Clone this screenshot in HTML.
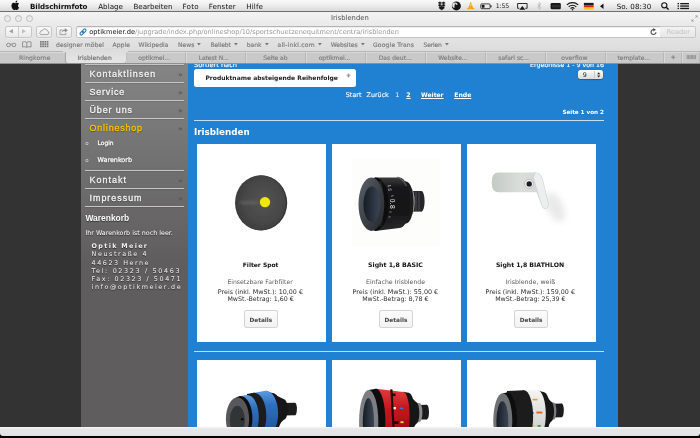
<!DOCTYPE html>
<html lang="de"><head><meta charset="utf-8"><title>Irisblenden</title>
<style>
html,body{margin:0;padding:0}
body{width:700px;height:438px;overflow:hidden;position:relative;background:#000;font-family:"DejaVu Sans",sans-serif}
.t{position:absolute;white-space:nowrap;margin:0;padding:0}
#root{position:absolute;left:0;top:0;width:700px;height:438px;overflow:hidden;will-change:transform}
.a{position:absolute}
svg{position:absolute;overflow:visible}
</style></head><body><div id="root">

<div class="a" style="left:0;top:63px;width:700px;height:365px;background:#333"></div>
<div class="a" style="left:81px;top:63px;width:107px;height:365px;background:linear-gradient(#858585,#5f5d5d 200px,#5f5d5d)"></div>
<div class="a" style="left:188px;top:63px;width:430px;height:365px;background:#2080d1"></div>
<div class="a" style="left:85px;top:63.9px;width:99px;height:1.1px;background:#c6c6c6;box-shadow:0 0.8px 1px rgba(0,0,0,.15)"></div>
<div class="a" style="left:85px;top:81.9px;width:99px;height:1.1px;background:#c6c6c6;box-shadow:0 0.8px 1px rgba(0,0,0,.15)"></div>
<div class="a" style="left:85px;top:99.8px;width:99px;height:1.1px;background:#c6c6c6;box-shadow:0 0.8px 1px rgba(0,0,0,.15)"></div>
<div class="a" style="left:85px;top:118.0px;width:99px;height:1.1px;background:#c6c6c6;box-shadow:0 0.8px 1px rgba(0,0,0,.15)"></div>
<div class="a" style="left:85px;top:170.1px;width:99px;height:1.1px;background:#c6c6c6;box-shadow:0 0.8px 1px rgba(0,0,0,.15)"></div>
<div class="a" style="left:85px;top:188.4px;width:99px;height:1.1px;background:#c6c6c6;box-shadow:0 0.8px 1px rgba(0,0,0,.15)"></div>
<div class="a" style="left:85px;top:206.4px;width:99px;height:1.1px;background:#c6c6c6;box-shadow:0 0.8px 1px rgba(0,0,0,.15)"></div>
<a id="t0" class="t" style="left:89.50px;top:66.60px;font:400 8.90px/14px 'Liberation Sans',sans-serif;color:#f4f4f4;letter-spacing:1.034px;text-shadow:0 0.5px 1px rgba(0,0,0,.55);-webkit-text-stroke:0.3px;">Kontaktlinsen</a>
<a id="t1" class="t" style="left:89.50px;top:84.60px;font:400 8.90px/14px 'Liberation Sans',sans-serif;color:#f4f4f4;letter-spacing:0.851px;text-shadow:0 0.5px 1px rgba(0,0,0,.55);-webkit-text-stroke:0.3px;">Service</a>
<a id="t2" class="t" style="left:89.50px;top:102.60px;font:400 8.90px/14px 'Liberation Sans',sans-serif;color:#f4f4f4;letter-spacing:0.926px;text-shadow:0 0.5px 1px rgba(0,0,0,.55);-webkit-text-stroke:0.3px;">Über uns</a>
<a id="t3" class="t" style="left:89.50px;top:120.80px;font:400 8.90px/14px 'Liberation Sans',sans-serif;color:#ffc400;letter-spacing:0.844px;text-shadow:0 0.5px 1px rgba(0,0,0,.55);-webkit-text-stroke:0.3px;">Onlineshop</a>
<a id="t4" class="t" style="left:89.50px;top:173.00px;font:400 8.90px/14px 'Liberation Sans',sans-serif;color:#f4f4f4;letter-spacing:1.065px;text-shadow:0 0.5px 1px rgba(0,0,0,.55);-webkit-text-stroke:0.3px;">Kontakt</a>
<a id="t5" class="t" style="left:89.50px;top:191.00px;font:400 8.90px/14px 'Liberation Sans',sans-serif;color:#f4f4f4;letter-spacing:1.014px;text-shadow:0 0.5px 1px rgba(0,0,0,.55);-webkit-text-stroke:0.3px;">Impressum</a>
<span id="t6" class="t" style="left:178.00px;top:68.80px;font:700 7.20px/11px 'DejaVu Sans',sans-serif;color:#5a5a5a;">»</span>
<span id="t7" class="t" style="left:178.00px;top:86.80px;font:700 7.20px/11px 'DejaVu Sans',sans-serif;color:#5a5a5a;">»</span>
<span id="t8" class="t" style="left:178.00px;top:104.80px;font:700 7.20px/11px 'DejaVu Sans',sans-serif;color:#585858;">»</span>
<span id="t9" class="t" style="left:178.00px;top:123.00px;font:700 7.20px/11px 'DejaVu Sans',sans-serif;color:#565656;">»</span>
<span id="t10" class="t" style="left:178.00px;top:175.20px;font:700 7.20px/11px 'DejaVu Sans',sans-serif;color:#555;">»</span>
<span id="t11" class="t" style="left:178.00px;top:193.20px;font:700 7.20px/11px 'DejaVu Sans',sans-serif;color:#555;">»</span>
<span id="t12" class="t" style="left:85.20px;top:138.70px;font:400 5.50px/9px 'DejaVu Sans',sans-serif;color:#ddd;">o</span>
<span id="t13" class="t" style="left:85.20px;top:155.70px;font:400 5.50px/9px 'DejaVu Sans',sans-serif;color:#ddd;">o</span>
<a id="t14" class="t" style="left:97.60px;top:138.30px;font:400 5.93px/10px 'DejaVu Sans',sans-serif;color:#fff;text-shadow:0 0.5px 1px rgba(0,0,0,.55);-webkit-text-stroke:0.25px;">Login</a>
<a id="t15" class="t" style="left:97.60px;top:155.30px;font:400 6.40px/10px 'DejaVu Sans',sans-serif;color:#fff;text-shadow:0 0.5px 1px rgba(0,0,0,.55);-webkit-text-stroke:0.25px;">Warenkorb</a>
<span id="t16" class="t" style="left:85.40px;top:211.80px;font:700 8.46px/13px 'Liberation Sans',sans-serif;color:#fff;text-shadow:0 0.5px 1px rgba(0,0,0,.55);">Warenkorb</span>
<span id="t17" class="t" style="left:85.40px;top:227.80px;font:400 6.36px/10px 'DejaVu Sans',sans-serif;color:#fff;text-shadow:0 0.5px 1px rgba(0,0,0,.55);">Ihr Warenkorb ist noch leer.</span>
<span id="t18" class="t" style="left:91.60px;top:241.10px;font:700 6.40px/10px 'DejaVu Sans',sans-serif;color:#f2f2f2;letter-spacing:1.329px;text-shadow:0 0.5px 1px rgba(0,0,0,.55);">Optik Meier</span>
<span id="t19" class="t" style="left:91.60px;top:249.30px;font:400 6.40px/10px 'DejaVu Sans',sans-serif;color:#f2f2f2;letter-spacing:1.570px;text-shadow:0 0.5px 1px rgba(0,0,0,.55);">Neustraße 4</span>
<span id="t20" class="t" style="left:91.60px;top:257.60px;font:400 6.40px/10px 'DejaVu Sans',sans-serif;color:#f2f2f2;letter-spacing:1.529px;text-shadow:0 0.5px 1px rgba(0,0,0,.55);">44623 Herne</span>
<span id="t21" class="t" style="left:91.60px;top:265.80px;font:400 6.40px/10px 'DejaVu Sans',sans-serif;color:#f2f2f2;letter-spacing:1.665px;text-shadow:0 0.5px 1px rgba(0,0,0,.55);">Tel: 02323 / 50463</span>
<span id="t22" class="t" style="left:91.60px;top:274.00px;font:400 6.40px/10px 'DejaVu Sans',sans-serif;color:#f2f2f2;letter-spacing:1.597px;text-shadow:0 0.5px 1px rgba(0,0,0,.55);">Fax: 02323 / 50471</span>
<span id="t23" class="t" style="left:91.60px;top:282.20px;font:400 6.40px/10px 'DejaVu Sans',sans-serif;color:#f2f2f2;letter-spacing:1.574px;text-shadow:0 0.5px 1px rgba(0,0,0,.55);">info@optikmeier.de</span>
<span id="t24" class="t" style="left:194.00px;top:59.80px;font:400 6.63px/11px 'DejaVu Sans',sans-serif;color:#fff;-webkit-text-stroke:0.15px;">Sortiert nach</span>
<div class="a" style="left:194px;top:69.4px;width:162px;height:17.8px;background:#fff;border-radius:2.5px"></div>
<span id="t25" class="t" style="left:205.40px;top:73.20px;font:700 6.02px/10px 'DejaVu Sans',sans-serif;color:#222;">Produktname absteigende Reihenfolge</span>
<svg style="left:346.3px;top:72.8px" width="5" height="5" viewBox="0 0 10 10"><path d="M5 0.5 L7.5 3.5 H6 V4.5 H7 V3.2 L9.5 5 L7 6.8 V5.5 H6 V6.5 H7.5 L5 9.5 L2.5 6.5 H4 V5.5 H3 V6.8 L0.5 5 L3 3.2 V4.5 H4 V3.5 H2.5 Z" fill="#9a9a9a"/></svg>
<span id="t26" class="t" style="left:530.00px;top:60.20px;font:400 6.27px/10px 'DejaVu Sans',sans-serif;color:#fff;-webkit-text-stroke:0.15px;">Ergebnisse 1 - 9 von 16</span>
<div class="a" style="left:578.3px;top:70px;width:24.5px;height:8.8px;border-radius:2.5px;background:linear-gradient(#fdfdfd,#e9e9e9 55%,#dcdcdc);box-shadow:0 0.5px 1px rgba(0,0,0,.45)"></div>
<div class="a" style="left:594px;top:70.6px;width:0.6px;height:7.6px;background:#c9c9c9"></div>
<span id="t27" class="t" style="left:582.80px;top:69.50px;font:400 6.40px/10px 'DejaVu Sans',sans-serif;color:#111;">9</span>
<svg style="left:596.6px;top:71.6px" width="3.4" height="5.8" viewBox="0 0 6 10"><path d="M3 0.3 L5.6 3.8 H0.4 Z M3 9.7 L5.6 6.2 H0.4 Z" fill="#222"/></svg>
<span id="t28" class="t" style="left:345.80px;top:89.60px;font:400 6.43px/10px 'DejaVu Sans',sans-serif;color:#f2f8fd;-webkit-text-stroke:0.15px;">Start</span>
<span id="t29" class="t" style="left:366.60px;top:89.60px;font:400 6.36px/10px 'DejaVu Sans',sans-serif;color:#f2f8fd;-webkit-text-stroke:0.15px;">Zurück</span>
<span id="t30" class="t" style="left:395.30px;top:89.60px;font:400 6.30px/10px 'DejaVu Sans',sans-serif;color:#f2f8fd;">1</span>
<a id="t31" class="t" style="left:406.30px;top:89.60px;font:700 6.30px/10px 'DejaVu Sans',sans-serif;color:#fff;text-decoration:underline;">2</a>
<a id="t32" class="t" style="left:421.00px;top:89.60px;font:700 6.05px/10px 'DejaVu Sans',sans-serif;color:#fff;text-decoration:underline;">Weiter</a>
<a id="t33" class="t" style="left:454.20px;top:89.60px;font:700 6.17px/10px 'DejaVu Sans',sans-serif;color:#fff;text-decoration:underline;">Ende</a>
<span id="t34" class="t" style="left:562.40px;top:107.50px;font:700 5.67px/9px 'DejaVu Sans',sans-serif;color:#fff;letter-spacing:-0.021px;">Seite 1 von 2</span>
<div class="a" style="left:194px;top:120px;width:410px;height:1px;background:#c6ddf2"></div>
<h1 id="t35" class="t" style="left:194.00px;top:125.50px;font:700 8.75px/13px 'DejaVu Sans',sans-serif;color:#fff;">Irisblenden</h1>
<div class="a" style="left:194px;top:351px;width:410px;height:1px;background:#c6ddf2"></div>
<div class="a" style="left:196.8px;top:144.3px;width:129.3px;height:198px;background:#fff"></div>
<div class="a" style="left:196.8px;top:360.2px;width:129.3px;height:70px;background:#fff"></div>
<span id="t36" class="t" style="left:242.80px;top:259.80px;font:700 5.97px/10px 'DejaVu Sans',sans-serif;color:#111;">Filter Spot</span>
<span id="t37" class="t" style="left:227.40px;top:276.70px;font:400 6.15px/10px 'DejaVu Sans',sans-serif;color:#5a5a5a;">Einsetzbare Farbfilter</span>
<span id="t38" class="t" style="left:217.80px;top:286.70px;font:400 6.37px/10px 'DejaVu Sans',sans-serif;color:#2e2e2e;">Preis (inkl. MwSt.): 10,00 €</span>
<span id="t39" class="t" style="left:227.40px;top:293.90px;font:400 6.30px/10px 'DejaVu Sans',sans-serif;color:#2e2e2e;">MwSt.-Betrag: 1,60 €</span>
<div class="a" style="left:244.0px;top:310.1px;width:32.4px;height:16.2px;border:0.6px solid #d3d3d3;border-radius:2.2px;background:linear-gradient(#fcfcfc,#f2f2f2)"></div>
<a id="t40" class="t" style="left:249.45px;top:314.60px;font:700 5.81px/10px 'DejaVu Sans',sans-serif;color:#444;">Details</a>
<div class="a" style="left:331.9px;top:144.3px;width:129.3px;height:198px;background:#fff"></div>
<div class="a" style="left:331.9px;top:360.2px;width:129.3px;height:70px;background:#fff"></div>
<span id="t41" class="t" style="left:368.00px;top:259.80px;font:700 6.24px/10px 'DejaVu Sans',sans-serif;color:#111;">Sight 1,8 BASIC</span>
<span id="t42" class="t" style="left:366.00px;top:276.70px;font:400 6.19px/10px 'DejaVu Sans',sans-serif;color:#5a5a5a;">Einfache Irisblende</span>
<span id="t43" class="t" style="left:352.60px;top:286.70px;font:400 6.40px/10px 'DejaVu Sans',sans-serif;color:#2e2e2e;">Preis (inkl. MwSt.): 55,00 €</span>
<span id="t44" class="t" style="left:362.20px;top:293.90px;font:400 6.31px/10px 'DejaVu Sans',sans-serif;color:#2e2e2e;">MwSt.-Betrag: 8,78 €</span>
<div class="a" style="left:379.0px;top:310.1px;width:32.4px;height:16.2px;border:0.6px solid #d3d3d3;border-radius:2.2px;background:linear-gradient(#fcfcfc,#f2f2f2)"></div>
<a id="t45" class="t" style="left:384.55px;top:314.60px;font:700 5.81px/10px 'DejaVu Sans',sans-serif;color:#444;">Details</a>
<div class="a" style="left:467.0px;top:144.3px;width:129.3px;height:198px;background:#fff"></div>
<div class="a" style="left:467.0px;top:360.2px;width:129.3px;height:70px;background:#fff"></div>
<span id="t46" class="t" style="left:495.90px;top:259.80px;font:700 6.17px/10px 'DejaVu Sans',sans-serif;color:#111;">Sight 1,8 BIATHLON</span>
<span id="t47" class="t" style="left:505.50px;top:276.70px;font:400 6.31px/10px 'DejaVu Sans',sans-serif;color:#5a5a5a;">Irisblende, weiß</span>
<span id="t48" class="t" style="left:485.60px;top:286.70px;font:400 6.38px/10px 'DejaVu Sans',sans-serif;color:#2e2e2e;">Preis (inkl. MwSt.): 159,00 €</span>
<span id="t49" class="t" style="left:495.20px;top:293.90px;font:400 6.30px/10px 'DejaVu Sans',sans-serif;color:#2e2e2e;">MwSt.-Betrag: 25,39 €</span>
<div class="a" style="left:514.1px;top:310.1px;width:32.4px;height:16.2px;border:0.6px solid #d3d3d3;border-radius:2.2px;background:linear-gradient(#fcfcfc,#f2f2f2)"></div>
<a id="t50" class="t" style="left:519.65px;top:314.60px;font:700 5.81px/10px 'DejaVu Sans',sans-serif;color:#444;">Details</a>
<svg style="left:0;top:0" width="700" height="438" viewBox="0 0 700 438">
<defs>
<radialGradient id="gd" cx="0.56" cy="0.48" r="0.62"><stop offset="0" stop-color="#555555"/><stop offset="0.6" stop-color="#474747"/><stop offset="1" stop-color="#393939"/></radialGradient>
<linearGradient id="gv" x1="0" y1="0" x2="0" y2="1"><stop offset="0" stop-color="#3c3c3e"/><stop offset="0.18" stop-color="#19191b"/><stop offset="0.7" stop-color="#151517"/><stop offset="1" stop-color="#2a2a2c"/></linearGradient>
<linearGradient id="gface" x1="0" y1="0" x2="1" y2="1"><stop offset="0" stop-color="#5b6068"/><stop offset="1" stop-color="#23262b"/></linearGradient>
<linearGradient id="ghole" x1="0" y1="0" x2="1" y2="0"><stop offset="0" stop-color="#171b24"/><stop offset="1" stop-color="#3b4656"/></linearGradient>
<linearGradient id="gblue" x1="0" y1="0" x2="0" y2="1"><stop offset="0" stop-color="#5d9be0"/><stop offset="0.3" stop-color="#2f6fc0"/><stop offset="1" stop-color="#1f4f96"/></linearGradient>
<linearGradient id="gred" x1="0" y1="0" x2="0" y2="1"><stop offset="0" stop-color="#e03a3a"/><stop offset="0.35" stop-color="#c3141c"/><stop offset="1" stop-color="#8e0c12"/></linearGradient>
<linearGradient id="gplate" x1="0" y1="0" x2="1" y2="0"><stop offset="0" stop-color="#c3c9c4"/><stop offset="0.5" stop-color="#d9deda"/><stop offset="1" stop-color="#d0d5d2"/></linearGradient>
<linearGradient id="gwhite" x1="0" y1="0" x2="0" y2="1"><stop offset="0" stop-color="#f4f4f2"/><stop offset="1" stop-color="#c9c9c6"/></linearGradient>
<filter id="bl" x="-50%" y="-50%" width="200%" height="200%"><feGaussianBlur stdDeviation="3"/></filter>
<filter id="b2" x="-30%" y="-100%" width="160%" height="300%"><feGaussianBlur stdDeviation="1.2"/></filter>
<filter id="b1" x="-20%" y="-20%" width="140%" height="140%"><feGaussianBlur stdDeviation="0.35"/></filter>
</defs>
<g filter="url(#b1)">
<ellipse cx="261.6" cy="202.9" rx="25.6" ry="27.5" fill="#303030"/>
<ellipse cx="260.5" cy="202.8" rx="25.5" ry="27.5" fill="url(#gd)"/>
<ellipse cx="249" cy="202.6" rx="10" ry="2.2" fill="#6a6a6a" opacity="0.55" filter="url(#b2)"/>
<circle cx="265" cy="202.1" r="5.2" fill="#efe80f"/>
</g>
<rect x="352" y="158" width="88" height="88" fill="#fdfdfc"/>
<g filter="url(#b1)">
<path d="M408 191 L421.5 191 L421.5 211.6 L408 211.6 Z" fill="#26262a"/><ellipse cx="421.5" cy="201.3" rx="3.1" ry="10.3" fill="#26262a"/>
<path d="M413 191.5 V211 M416 191.5 V211 M419 191.5 V211" stroke="#55555a" stroke-width="0.8"/>
<path d="M404 187.8 L410.5 187.8 L410.5 215.8 L404 215.8 Z" fill="#9a9a9a"/><ellipse cx="410.5" cy="201.8" rx="4.2" ry="14" fill="#9a9a9a"/>
<path d="M396 181.4 L406 181.4 L406 223.4 L396 223.4 Z" fill="#1a1a1c"/><ellipse cx="406" cy="202.4" rx="7.6" ry="21" fill="#1a1a1c"/>
<path d="M375 177.5 L399.5 177.6 L399.5 228 L375 230.9 Z" fill="url(#gv)"/><ellipse cx="399.5" cy="202.8" rx="10.6" ry="25.2" fill="url(#gv)"/>
<ellipse cx="375.6" cy="204.2" rx="12.9" ry="26.7" fill="#0d0d0f"/>
<ellipse cx="371.4" cy="204.2" rx="12.9" ry="26.7" fill="url(#gface)"/>
<ellipse cx="371.9" cy="204.2" rx="8.5" ry="17.6" fill="url(#ghole)"/>
<text transform="translate(389.6 198.8) rotate(90)" font-family="'Liberation Sans',sans-serif" font-size="6.6" fill="#e9e9e9" letter-spacing="0.4">0.8</text>
<text transform="translate(387.8 184.8) rotate(84)" font-family="'Liberation Sans',sans-serif" font-size="4.3" fill="#dcdcdc" letter-spacing="0.2">1.5</text>
<path d="M391 196.3 L393.6 195.6 M389.5 212 L391.5 212 M388.5 217 L390.5 216.8" stroke="#d0d0d0" stroke-width="0.6"/>
<path d="M380.3 181 Q385.2 203 380.3 227" fill="none" stroke="#3a3a3d" stroke-width="2.2" stroke-dasharray="0.5 0.6"/>
<path d="M397 177 Q403 179 406.5 186" fill="none" stroke="#6a6a6e" stroke-width="1.2" opacity="0.8"/>
</g>
<ellipse cx="555" cy="207" rx="8" ry="16" fill="#e9e9e9" filter="url(#bl)" transform="rotate(-25 555 207)"/>
<g filter="url(#b1)">
<path d="M498 172.4 H535 Q541 173 542.5 179 L548.3 203 Q549 208 545.8 209 Q543 209 541.5 205 L536.5 192.3 H498 Q491.7 192 491.7 182.3 Q491.7 172.6 498 172.4 Z" fill="url(#gplate)"/>
<path d="M535 172.4 Q541 173 542.5 179 L548.3 203 Q549 208 545.8 209 Q543 209 541.5 205 L533.5 178 Z" fill="#eceff0" stroke="#c2c7c5" stroke-width="0.4"/>
<circle cx="529" cy="183.8" r="4.5" fill="#eceeee" stroke="#9a9d9b" stroke-width="0.5"/>
<circle cx="529.2" cy="183.9" r="2.7" fill="#1c1f26"/>
</g>
<clipPath id="cp"><rect x="190" y="360" width="420" height="67.5"/></clipPath>
<g clip-path="url(#cp)"><g filter="url(#b1)">
<path d="M283 403 L295 402.7 L295 415.3 L283 415.6 Z" fill="#1b1b1f"/><ellipse cx="295" cy="409" rx="1.9" ry="6.3" fill="#1b1b1f"/>
<path d="M272 393.4 L283.5 399 L283.5 420 L272 431.4 Z" fill="#141417"/><ellipse cx="283.5" cy="409.5" rx="4.2" ry="10.5" fill="#141417"/>
<path d="M266 390.8 L272 392.9 L272 431.9 L266 436.4 Z" fill="#18181b"/><ellipse cx="272" cy="412.4" rx="10.3" ry="19.5" fill="#18181b"/>
<path d="M254 392.7 L266 390.8 L266 436.4 L254 439.1 Z" fill="url(#gblue)"/><ellipse cx="266" cy="413.6" rx="12.1" ry="22.8" fill="url(#gblue)"/>
<path d="M247 393.9 L254 392.7 L254 439.1 L247 440.5 Z" fill="#1c1c1f"/><ellipse cx="254" cy="415.9" rx="12.3" ry="23.2" fill="#1c1c1f"/>
<path d="M240.5 396.1 L247 394.9 L247 439.5 L240.5 440.7 Z" fill="url(#gblue)"/><ellipse cx="247" cy="417.2" rx="11.8" ry="22.3" fill="url(#gblue)"/>
<path d="M237.5 397.3 L240.5 396 L240.5 440.8 L237.5 440.7 Z" fill="#0e0e10"/><ellipse cx="240.5" cy="418.4" rx="11.9" ry="22.4" fill="#0e0e10"/>
<ellipse cx="237.5" cy="419" rx="11.6" ry="21.7" fill="#58595b"/>
<ellipse cx="237.3" cy="420.3" rx="7.6" ry="14.6" fill="#333436"/>
<circle cx="242.3" cy="419.3" r="1.4" fill="#0c0c0c"/>
<path d="M419 405 L426.8 404.8 L426.8 419.4 L419 419.6 Z" fill="#1a1a1d"/><ellipse cx="426.8" cy="412.1" rx="2.2" ry="7.3" fill="#1a1a1d"/>
<path d="M415 403.2 L419.6 403.1 L419.6 421.9 L415 422.4 Z" fill="#8a8a8e"/><ellipse cx="419.6" cy="412.5" rx="2.8" ry="9.4" fill="#8a8a8e"/>
<path d="M408 394 L416 402 L416 424 L408 436 Z" fill="#131315"/><ellipse cx="416" cy="413" rx="3.3" ry="11" fill="#131315"/>
<path d="M403 391.7 L408.5 392.8 L408.5 437.8 L403 440.7 Z" fill="#161618"/><ellipse cx="408.5" cy="415.3" rx="6.5" ry="22.5" fill="#161618"/>
<path d="M376 388.7 L403.3 391.9 L403.3 440.5 L376 452.7 Z" fill="url(#gred)"/><ellipse cx="403.3" cy="416.2" rx="6.3" ry="24.3" fill="url(#gred)"/>
<path d="M390.3 389.2 L392.5 389.4 L394.8 430 L392.6 430 Z" fill="#1c0a0c"/>
<rect x="393.6" y="407" width="2.3" height="2.3" fill="#fff"/><rect x="399.8" y="407.6" width="3.4" height="1.5" fill="#2a7fd0"/><rect x="400.5" y="421.3" width="3" height="1.8" fill="#f0e040"/><rect x="391.5" y="393.5" width="4" height="2.6" fill="#1c0a0c"/><rect x="393.5" y="421" width="5" height="3" fill="#1c0a0c"/>
<path d="M368.7 390 L376 388.7 L376 452.7 L368.7 454 Z" fill="#0d0d0f"/><ellipse cx="376" cy="420.7" rx="9.3" ry="32" fill="#0d0d0f"/>
<ellipse cx="368.7" cy="422" rx="9.6" ry="32" fill="#7d7f82"/>
<ellipse cx="368.4" cy="422.5" rx="5.6" ry="24.6" fill="url(#ghole)"/>
<path d="M553 403.7 L561.7 403.5 L561.7 417.3 L553 417.5 Z" fill="#1a1a1d"/><ellipse cx="561.7" cy="410.4" rx="2.1" ry="6.9" fill="#1a1a1d"/>
<path d="M550 402.4 L553.8 402.4 L553.8 419.6 L550 420 Z" fill="#7a7a7e"/><ellipse cx="553.8" cy="411" rx="2.6" ry="8.6" fill="#7a7a7e"/>
<path d="M543 393 L551 401.5 L551 421.5 L543 433 Z" fill="#131315"/><ellipse cx="551" cy="411.5" rx="3" ry="10" fill="#131315"/>
<path d="M537.5 390.6 L543.3 392 L543.3 434 L537.5 437.6 Z" fill="#161618"/><ellipse cx="543.3" cy="413" rx="7.2" ry="21" fill="#161618"/>
<path d="M524 390.2 L537.5 390.1 L537.5 438.1 L524 443.2 Z" fill="url(#gwhite)"/><ellipse cx="537.5" cy="414.1" rx="8.3" ry="24" fill="url(#gwhite)"/>
<rect x="532.5" y="398.8" width="5" height="1.6" fill="#d9a520"/><rect x="536.4" y="411.6" width="6" height="1.9" fill="#e8641c"/><rect x="531" y="412.2" width="2.8" height="1.8" fill="#2a7fd0"/><rect x="531.6" y="425" width="3" height="1.6" fill="#cfd02a"/><rect x="537.5" y="425.2" width="3.3" height="1.5" fill="#2f8a3a"/>
<path d="M507 390.9 L524 390.2 L524 443.2 L507 448.9 Z" fill="#1a1a1d"/><ellipse cx="524" cy="416.7" rx="9.1" ry="26.5" fill="#1a1a1d"/>
<path d="M502.8 393.2 L507.3 392.4 L507.3 447.4 L502.8 448.2 Z" fill="#0c0c0e"/><ellipse cx="507.3" cy="419.9" rx="9.5" ry="27.5" fill="#0c0c0e"/>
<ellipse cx="502.8" cy="420.7" rx="9.5" ry="27.5" fill="#6f7174"/>
<ellipse cx="502.4" cy="421.5" rx="6" ry="20.2" fill="url(#ghole)"/>
</g></g>
</svg>
<div class="a" style="left:0;top:427.3px;width:700px;height:8.4px;background:linear-gradient(#f6f6f6,#e6e6e6 25%,#e2e2e2);border-radius:0 0 3px 3px"></div>
<div class="a" style="left:0;top:0;width:700px;height:12px;background:linear-gradient(#fafafa,#ececec 45%,#d6d6d6)"></div>
<div class="a" style="left:0;top:11.2px;width:700px;height:1px;background:#707070"></div>
<svg style="left:10.8px;top:0.3px" width="9" height="10.6" viewBox="0 0 18 22"><path d="M14.2 11.7c0-2.6 2.1-3.8 2.2-3.9-1.2-1.8-3.1-2-3.7-2-1.6-.2-3.1.9-3.9.9-.8 0-2-.9-3.3-.9-1.7 0-3.3 1-4.1 2.5-1.8 3-.5 7.5 1.3 10 .8 1.2 1.8 2.6 3.1 2.5 1.3 0 1.7-.8 3.2-.8s1.9.8 3.2.8c1.3 0 2.2-1.2 3-2.4.9-1.4 1.3-2.7 1.3-2.8 0 0-2.5-1-2.3-3.8zM11.8 4c.7-.8 1.2-2 1-3.2-1 0-2.2.7-2.9 1.5-.6.7-1.2 1.9-1 3 1.1.1 2.2-.5 2.9-1.3z" fill="#111"/></svg>
<span id="t51" class="t" style="left:30.00px;top:0.70px;font:700 7.15px/11px 'DejaVu Sans',sans-serif;color:#111;letter-spacing:-0.097px;">Bildschirmfoto</span>
<span id="t52" class="t" style="left:98.20px;top:0.70px;font:400 7.15px/11px 'DejaVu Sans',sans-serif;color:#111;letter-spacing:0.019px;">Ablage</span>
<span id="t53" class="t" style="left:133.50px;top:0.70px;font:400 7.15px/11px 'DejaVu Sans',sans-serif;color:#111;letter-spacing:-0.026px;">Bearbeiten</span>
<span id="t54" class="t" style="left:182.50px;top:0.70px;font:400 7.15px/11px 'DejaVu Sans',sans-serif;color:#111;letter-spacing:0.270px;">Foto</span>
<span id="t55" class="t" style="left:208.70px;top:0.70px;font:400 7.15px/11px 'DejaVu Sans',sans-serif;color:#111;letter-spacing:0.086px;">Fenster</span>
<span id="t56" class="t" style="left:246.20px;top:0.70px;font:400 7.15px/11px 'DejaVu Sans',sans-serif;color:#111;letter-spacing:0.138px;">Hilfe</span>
<span id="t57" class="t" style="left:495.70px;top:1.20px;font:400 6.21px/10px 'DejaVu Sans',sans-serif;color:#222;letter-spacing:-0.145px;">1:55</span>
<span id="t58" class="t" style="left:616.70px;top:0.70px;font:400 7.15px/11px 'DejaVu Sans',sans-serif;color:#111;letter-spacing:0.074px;">So. 08:30</span>
<svg style="left:0;top:0" width="700" height="12" viewBox="0 0 700 12">
<g fill="#151515" stroke="#151515" stroke-width="0.35" stroke-linejoin="round"><path d="M439.9 1.7 L441.7 2.9 L439.9 4.1 L438.1 2.9 Z M443.5 1.7 L445.3 2.9 L443.5 4.1 L441.7 2.9 Z M439.9 4.1 L441.7 5.3 L439.9 6.5 L438.1 5.3 Z M443.5 4.1 L445.3 5.3 L443.5 6.5 L441.7 5.3 Z"/><path d="M439.2 6.6 L439.9 7.1 L441.7 5.9 L443.5 7.1 L444.2 6.6 V8.3 L441.7 10.1 L439.2 8.3 Z"/></g>
<circle cx="456.4" cy="5.9" r="4.5" fill="#151515"/><circle cx="455" cy="5.2" r="2.7" fill="#e4e4e4"/><path d="M455 3.2 l1 1.6 h2.3 l1 -1.6 l.6 3.6 a2.7 2.7 0 0 1 -5.5 0 Z" fill="#151515"/>
<path d="M470.7 1.4 L473.2 8 H474.3 V9.3 H467.1 V8 H468.2 Z" fill="#f2a81a"/><path d="M469.7 4.2 h2 l.5 1.3 h-3 Z" fill="#f8d27a"/>
<rect x="480.8" y="3.9" width="9.3" height="4.8" rx="1" fill="none" stroke="#151515" stroke-width="0.8"/><rect x="490.5" y="5.3" width="1" height="2" fill="#151515"/><rect x="481.8" y="4.9" width="2.7" height="2.8" fill="#151515"/>
<path d="M519.3 8.3 H517.6 V3.5 H527.1 V8.3 H525.4" fill="none" stroke="#151515" stroke-width="0.9"/><path d="M522.35 6 L525.3 9.7 H519.4 Z" fill="#151515"/>
<path d="M537.6 4.2 L540.8 7.6 L539.2 9.4 V2.4 L540.8 4.2 L537.6 7.6" fill="none" stroke="#a9a9a9" stroke-width="0.6"/>
<rect x="550.6" y="3" width="10.2" height="6.2" rx="1.3" fill="#151515"/><path d="M553 4.6 V7.6 M555 4.6 V7.6 M557 4.6 V7.6 M558.9 4.6 V7.6" stroke="#7a7a7a" stroke-width="0.5"/>
<g fill="none" stroke="#151515" stroke-width="1.15"><path d="M566.8 4.9 A8.2 8.2 0 0 1 578.2 4.9"/><path d="M568.7 6.8 A5.4 5.4 0 0 1 576.3 6.8"/><path d="M570.6 8.6 A2.7 2.7 0 0 1 574.4 8.6"/></g><circle cx="572.5" cy="9.7" r="0.8" fill="#151515"/>
<rect x="583.9" y="2.9" width="9.7" height="2.3" fill="#1a1a1a"/><rect x="583.9" y="5.2" width="9.7" height="2.3" fill="#d8201c"/><rect x="583.9" y="7.5" width="9.7" height="2.2" fill="#f2c81e"/>
<path d="M603.5 3.5 V8.9 L600 6.2 Z" fill="#151515"/>
<circle cx="664.3" cy="5.3" r="2.6" fill="none" stroke="#151515" stroke-width="1.1"/><path d="M666.2 7.2 L668.6 9.6" stroke="#151515" stroke-width="1.4"/>
<g fill="#151515"><rect x="677.6" y="3" width="1.4" height="1.3"/><rect x="680.2" y="3" width="8.8" height="1.3"/><rect x="677.6" y="5.4" width="1.4" height="1.3"/><rect x="680.2" y="5.4" width="8.8" height="1.3"/><rect x="677.6" y="7.8" width="1.4" height="1.3"/><rect x="680.2" y="7.8" width="8.8" height="1.3"/></g>
</svg>
<div class="a" style="left:0;top:12.3px;width:700px;height:39px;background:linear-gradient(#f3f3f3,#ebebeb 30%,#dcdcdc)"></div>
<div class="a" style="left:4.1px;top:14.9px;width:5.2px;height:5.2px;border-radius:50%;border:0.6px solid #bcbcbc;background:linear-gradient(#e2e2e2,#f2f2f2)"></div>
<div class="a" style="left:14.9px;top:14.9px;width:5.2px;height:5.2px;border-radius:50%;border:0.6px solid #bcbcbc;background:linear-gradient(#e2e2e2,#f2f2f2)"></div>
<div class="a" style="left:25.9px;top:14.9px;width:5.2px;height:5.2px;border-radius:50%;border:0.6px solid #bcbcbc;background:linear-gradient(#e2e2e2,#f2f2f2)"></div>
<span id="t59" class="t" style="left:331.00px;top:13.00px;font:400 6.80px/11px 'DejaVu Sans',sans-serif;color:#505050;">Irisblenden</span>
<svg style="left:691.2px;top:14.6px" width="7" height="7" viewBox="0 0 14 14"><path d="M8 1 H13 V6 Z M6 13 H1 V8 Z" fill="#9a9a9a"/><path d="M12 2 L8.5 5.5 M2 12 L5.5 8.5" stroke="#9a9a9a" stroke-width="1.6"/></svg>
<div class="a" style="left:5.4px;top:26px;width:24.4px;height:10px;border:0.6px solid #c6c6c6;border-radius:2.2px;background:linear-gradient(#f9f9f9,#e9e9e9);box-shadow:0 0.5px 0 rgba(255,255,255,.8)"></div>
<div class="a" style="left:18px;top:26.6px;width:0.6px;height:10px;background:#cdcdcd"></div>
<svg style="left:9.3px;top:29.3px" width="17" height="4.6" viewBox="0 0 34 9.2"><path d="M8 0 V9.2 L0 4.6 Z" fill="#a2a2a2"/><path d="M26 0 V9.2 L34 4.6 Z" fill="#c0c0c0"/></svg>
<div class="a" style="left:36.4px;top:26px;width:13.8px;height:10px;border:0.6px solid #c6c6c6;border-radius:2.2px;background:linear-gradient(#f9f9f9,#e9e9e9);box-shadow:0 0.5px 0 rgba(255,255,255,.8)"></div>
<svg style="left:38.6px;top:27.6px" width="10.4" height="7.2" viewBox="0 0 26 18"><path d="M7 16.5 H20 a4.5 4.5 0 0 0 1-8.9 a6.5 6.5 0 0 0 -12.5 -1.3 a3.5 3.5 0 0 0 -4.3 3.6 a3.4 3.4 0 0 0 2.8 6.6 Z" fill="none" stroke="#8c8c8c" stroke-width="1.9"/></svg>
<div class="a" style="left:56.4px;top:26px;width:13.5px;height:10px;border:0.6px solid #c6c6c6;border-radius:2.2px;background:linear-gradient(#f9f9f9,#e9e9e9);box-shadow:0 0.5px 0 rgba(255,255,255,.8)"></div>
<svg style="left:58.9px;top:27.6px" width="9.4" height="7.4" viewBox="0 0 24 19"><path d="M9 5 H2.5 V17 H17.5 V12.5" fill="none" stroke="#8e8e8e" stroke-width="2"/><path d="M15 0.5 L23 6 L15 11.5 V8 C11 8 8.5 9.5 7 13 C7 7.5 10.5 4.2 15 4 Z" fill="#8e8e8e"/></svg>
<div class="a" style="left:76.4px;top:26.2px;width:583px;height:10.2px;border:0.6px solid #c6c6c6;border-top-color:#b4b4b4;border-radius:2px 0 0 2px;background:#fff;box-shadow:inset 0 0.6px 0.8px rgba(0,0,0,.14)"></div>
<div class="a" style="left:660px;top:26.2px;width:34.6px;height:10.2px;border:0.6px solid #c8c8c8;border-left:none;border-radius:0 2px 2px 0;background:linear-gradient(#f3f3f3,#e7e7e7)"></div>
<span id="t60" class="t" style="left:666.70px;top:26.70px;font:400 6.59px/11px 'DejaVu Sans',sans-serif;color:#c2c2c2;">Reader</span>
<svg style="left:79.3px;top:27.5px" width="8" height="8" viewBox="0 0 16 16"><g fill="none" stroke="#2b7bc0" stroke-width="2.2" transform="rotate(-45 8 8)"><rect x="0.6" y="5.4" width="8.4" height="5.2" rx="2.6"/><rect x="7" y="5.4" width="8.4" height="5.2" rx="2.6"/></g></svg>
<span id="t61" class="t" style="left:89.30px;top:26.70px;font:400 6.66px/11px 'DejaVu Sans',sans-serif;color:#111;">optikmeier.de</span>
<span id="t62" class="t" style="left:135.00px;top:26.70px;font:400 6.58px/11px 'DejaVu Sans',sans-serif;color:#999;">/jupgrade/index.php/onlineshop/10/sportschuetzenequitment/centra/irisblenden</span>
<svg style="left:650.4px;top:27.9px" width="7" height="7.6" viewBox="0 0 12 13"><path d="M10.2 7.2 a4.2 4.2 0 1 1 -3.700 -4.400" fill="none" stroke="#4e4e4e" stroke-width="2"/><path d="M5.600 -0.200 L10.200 2.800 L5.600 5.900 Z" fill="#4e4e4e"/></svg>
<svg style="left:5.6px;top:41.8px" width="10.4" height="5.2" viewBox="0 0 21 10.5"><g fill="none" stroke="#808080" stroke-width="1.7"><ellipse cx="5" cy="6" rx="3.9" ry="3.5"/><ellipse cx="16" cy="6" rx="3.9" ry="3.5"/><path d="M8.7 4.8 Q10.5 3 12.3 4.8"/></g></svg>
<svg style="left:22.4px;top:41px" width="9.6" height="6.8" viewBox="0 0 20 14"><path d="M10 3 C7.5 1 4 1 1.2 2 V12.5 C4 11.5 7.5 11.5 10 13.2 C12.5 11.5 16 11.5 18.8 12.5 V2 C16 1 12.5 1 10 3 Z M10 3 V13" fill="none" stroke="#7a7a7a" stroke-width="1.6"/></svg>
<svg style="left:39.6px;top:41.2px" width="8.4" height="6.2" viewBox="0 0 16.5 12.1" fill="#787878"><rect x="0.0" y="0.0" width="3.3" height="3.3"/><rect x="4.4" y="0.0" width="3.3" height="3.3"/><rect x="8.8" y="0.0" width="3.3" height="3.3"/><rect x="13.2" y="0.0" width="3.3" height="3.3"/><rect x="0.0" y="4.4" width="3.3" height="3.3"/><rect x="4.4" y="4.4" width="3.3" height="3.3"/><rect x="8.8" y="4.4" width="3.3" height="3.3"/><rect x="13.2" y="4.4" width="3.3" height="3.3"/><rect x="0.0" y="8.8" width="3.3" height="3.3"/><rect x="4.4" y="8.8" width="3.3" height="3.3"/><rect x="8.8" y="8.8" width="3.3" height="3.3"/><rect x="13.2" y="8.8" width="3.3" height="3.3"/></svg>
<span id="t63" class="t" style="left:56.00px;top:39.90px;font:400 6.05px/10px 'DejaVu Sans',sans-serif;color:#7e7e7e;letter-spacing:0.075px;text-shadow:0 0.5px 0 rgba(255,255,255,.45);-webkit-text-stroke:0.2px;">designer möbel</span>
<span id="t64" class="t" style="left:112.50px;top:39.90px;font:400 6.05px/10px 'DejaVu Sans',sans-serif;color:#7e7e7e;letter-spacing:0.070px;text-shadow:0 0.5px 0 rgba(255,255,255,.45);-webkit-text-stroke:0.2px;">Apple</span>
<span id="t65" class="t" style="left:138.50px;top:39.90px;font:400 6.05px/10px 'DejaVu Sans',sans-serif;color:#7e7e7e;letter-spacing:0.062px;text-shadow:0 0.5px 0 rgba(255,255,255,.45);-webkit-text-stroke:0.2px;">Wikipedia</span>
<span id="t66" class="t" style="left:178.00px;top:39.90px;font:400 6.05px/10px 'DejaVu Sans',sans-serif;color:#7e7e7e;letter-spacing:0.052px;text-shadow:0 0.5px 0 rgba(255,255,255,.45);-webkit-text-stroke:0.2px;">News</span>
<svg style="left:197.3px;top:43.3px" width="3.8" height="2.6" viewBox="0 0 8 5"><path d="M0 0 H8 L4 5 Z" fill="#777"/></svg>
<span id="t67" class="t" style="left:210.50px;top:39.90px;font:400 6.05px/10px 'DejaVu Sans',sans-serif;color:#7e7e7e;letter-spacing:-0.145px;text-shadow:0 0.5px 0 rgba(255,255,255,.45);-webkit-text-stroke:0.2px;">Beliebt</span>
<svg style="left:234.1px;top:43.3px" width="3.8" height="2.6" viewBox="0 0 8 5"><path d="M0 0 H8 L4 5 Z" fill="#777"/></svg>
<span id="t68" class="t" style="left:246.80px;top:39.90px;font:400 6.05px/10px 'DejaVu Sans',sans-serif;color:#7e7e7e;letter-spacing:-0.030px;text-shadow:0 0.5px 0 rgba(255,255,255,.45);-webkit-text-stroke:0.2px;">bank</span>
<svg style="left:264.5px;top:43.3px" width="3.8" height="2.6" viewBox="0 0 8 5"><path d="M0 0 H8 L4 5 Z" fill="#777"/></svg>
<span id="t69" class="t" style="left:277.50px;top:39.90px;font:400 6.05px/10px 'DejaVu Sans',sans-serif;color:#7e7e7e;letter-spacing:0.211px;text-shadow:0 0.5px 0 rgba(255,255,255,.45);-webkit-text-stroke:0.2px;">all-inkl.com</span>
<svg style="left:317.6px;top:43.3px" width="3.8" height="2.6" viewBox="0 0 8 5"><path d="M0 0 H8 L4 5 Z" fill="#777"/></svg>
<span id="t70" class="t" style="left:330.80px;top:39.90px;font:400 6.05px/10px 'DejaVu Sans',sans-serif;color:#7e7e7e;letter-spacing:-0.067px;text-shadow:0 0.5px 0 rgba(255,255,255,.45);-webkit-text-stroke:0.2px;">Websites</span>
<svg style="left:360.5px;top:43.3px" width="3.8" height="2.6" viewBox="0 0 8 5"><path d="M0 0 H8 L4 5 Z" fill="#777"/></svg>
<span id="t71" class="t" style="left:373.00px;top:39.90px;font:400 6.05px/10px 'DejaVu Sans',sans-serif;color:#7e7e7e;letter-spacing:0.161px;text-shadow:0 0.5px 0 rgba(255,255,255,.45);-webkit-text-stroke:0.2px;">Google Trans</span>
<span id="t72" class="t" style="left:423.60px;top:39.90px;font:400 6.05px/10px 'DejaVu Sans',sans-serif;color:#7e7e7e;letter-spacing:-0.216px;text-shadow:0 0.5px 0 rgba(255,255,255,.45);-webkit-text-stroke:0.2px;">Serien</span>
<svg style="left:444.9px;top:43.3px" width="3.8" height="2.6" viewBox="0 0 8 5"><path d="M0 0 H8 L4 5 Z" fill="#777"/></svg>
<div class="a" style="left:0;top:51px;width:700px;height:12.4px;background:#c9c9c9"></div>
<div class="a" style="left:-3.0px;top:51.2px;width:68.7px;height:12px;background:linear-gradient(#d8d8d8,#d3d3d3 50%%,#cccccc);border-top:0.6px solid #b6b6b6;box-shadow:inset 0.7px 0.7px 0 rgba(255,255,255,.38), inset -0.6px 0 0 #adadad"></div>
<div class="a" style="left:125.7px;top:51.2px;width:60.0px;height:12px;background:linear-gradient(#d8d8d8,#d3d3d3 50%%,#cccccc);border-top:0.6px solid #b6b6b6;box-shadow:inset 0.7px 0.7px 0 rgba(255,255,255,.38), inset -0.6px 0 0 #adadad"></div>
<div class="a" style="left:185.7px;top:51.2px;width:60.0px;height:12px;background:linear-gradient(#d8d8d8,#d3d3d3 50%%,#cccccc);border-top:0.6px solid #b6b6b6;box-shadow:inset 0.7px 0.7px 0 rgba(255,255,255,.38), inset -0.6px 0 0 #adadad"></div>
<div class="a" style="left:245.7px;top:51.2px;width:60.0px;height:12px;background:linear-gradient(#d8d8d8,#d3d3d3 50%%,#cccccc);border-top:0.6px solid #b6b6b6;box-shadow:inset 0.7px 0.7px 0 rgba(255,255,255,.38), inset -0.6px 0 0 #adadad"></div>
<div class="a" style="left:305.7px;top:51.2px;width:60.0px;height:12px;background:linear-gradient(#d8d8d8,#d3d3d3 50%%,#cccccc);border-top:0.6px solid #b6b6b6;box-shadow:inset 0.7px 0.7px 0 rgba(255,255,255,.38), inset -0.6px 0 0 #adadad"></div>
<div class="a" style="left:365.7px;top:51.2px;width:60.0px;height:12px;background:linear-gradient(#d8d8d8,#d3d3d3 50%%,#cccccc);border-top:0.6px solid #b6b6b6;box-shadow:inset 0.7px 0.7px 0 rgba(255,255,255,.38), inset -0.6px 0 0 #adadad"></div>
<div class="a" style="left:425.7px;top:51.2px;width:60.0px;height:12px;background:linear-gradient(#d8d8d8,#d3d3d3 50%%,#cccccc);border-top:0.6px solid #b6b6b6;box-shadow:inset 0.7px 0.7px 0 rgba(255,255,255,.38), inset -0.6px 0 0 #adadad"></div>
<div class="a" style="left:485.7px;top:51.2px;width:60.0px;height:12px;background:linear-gradient(#d8d8d8,#d3d3d3 50%%,#cccccc);border-top:0.6px solid #b6b6b6;box-shadow:inset 0.7px 0.7px 0 rgba(255,255,255,.38), inset -0.6px 0 0 #adadad"></div>
<div class="a" style="left:545.7px;top:51.2px;width:60.0px;height:12px;background:linear-gradient(#d8d8d8,#d3d3d3 50%%,#cccccc);border-top:0.6px solid #b6b6b6;box-shadow:inset 0.7px 0.7px 0 rgba(255,255,255,.38), inset -0.6px 0 0 #adadad"></div>
<div class="a" style="left:605.7px;top:51.2px;width:58.2px;height:12px;background:linear-gradient(#d8d8d8,#d3d3d3 50%%,#cccccc);border-top:0.6px solid #b6b6b6;box-shadow:inset 0.7px 0.7px 0 rgba(255,255,255,.38), inset -0.6px 0 0 #adadad"></div>
<div class="a" style="left:663.9px;top:51.2px;width:18.0px;height:12px;background:linear-gradient(#d8d8d8,#d3d3d3 50%%,#cccccc);border-top:0.6px solid #b6b6b6;box-shadow:inset 0.7px 0.7px 0 rgba(255,255,255,.38), inset -0.6px 0 0 #adadad"></div>
<div class="a" style="left:681.9px;top:51.2px;width:18.6px;height:12px;background:linear-gradient(#d8d8d8,#d3d3d3 50%%,#cccccc);border-top:0.6px solid #b6b6b6;box-shadow:inset 0.7px 0.7px 0 rgba(255,255,255,.38), inset -0.6px 0 0 #adadad"></div>
<div class="a" style="left:65.7px;top:50.4px;width:60.0px;height:12.8px;background:linear-gradient(#dddddd,#e5e5e5);border-radius:0 0 3px 3px;box-shadow:0 0 1.4px rgba(0,0,0,.5)"></div>
<div class="a" style="left:63.2px;top:49.4px;width:65.0px;height:3px;background:#dddddd"></div>
<span id="t73" class="t" style="left:19.00px;top:52.80px;font:400 6.00px/10px 'DejaVu Sans',sans-serif;color:#7d7d7d;letter-spacing:0.158px;text-shadow:0 0.5px 0 rgba(255,255,255,.45);-webkit-text-stroke:0.2px;">Ringkorne</span>
<span id="t74" class="t" style="left:77.50px;top:52.80px;font:400 6.00px/10px 'DejaVu Sans',sans-serif;color:#707070;letter-spacing:0.089px;text-shadow:0 0.5px 0 rgba(255,255,255,.45);-webkit-text-stroke:0.2px;">Irisblenden</span>
<span id="t75" class="t" style="left:138.30px;top:52.80px;font:400 6.00px/10px 'DejaVu Sans',sans-serif;color:#7d7d7d;letter-spacing:-0.011px;text-shadow:0 0.5px 0 rgba(255,255,255,.45);-webkit-text-stroke:0.2px;">optikmei...</span>
<span id="t76" class="t" style="left:198.70px;top:52.80px;font:400 6.00px/10px 'DejaVu Sans',sans-serif;color:#7d7d7d;letter-spacing:-0.067px;text-shadow:0 0.5px 0 rgba(255,255,255,.45);-webkit-text-stroke:0.2px;">Latest N...</span>
<span id="t77" class="t" style="left:263.20px;top:52.80px;font:400 6.00px/10px 'DejaVu Sans',sans-serif;color:#7d7d7d;letter-spacing:-0.044px;text-shadow:0 0.5px 0 rgba(255,255,255,.45);-webkit-text-stroke:0.2px;">Seite ab</span>
<span id="t78" class="t" style="left:318.70px;top:52.80px;font:400 6.00px/10px 'DejaVu Sans',sans-serif;color:#7d7d7d;letter-spacing:-0.011px;text-shadow:0 0.5px 0 rgba(255,255,255,.45);-webkit-text-stroke:0.2px;">optikmei...</span>
<span id="t79" class="t" style="left:378.70px;top:52.80px;font:400 6.00px/10px 'DejaVu Sans',sans-serif;color:#7d7d7d;letter-spacing:0.058px;text-shadow:0 0.5px 0 rgba(255,255,255,.45);-webkit-text-stroke:0.2px;">Das deut...</span>
<span id="t80" class="t" style="left:438.20px;top:52.80px;font:400 6.00px/10px 'DejaVu Sans',sans-serif;color:#7d7d7d;letter-spacing:-0.038px;text-shadow:0 0.5px 0 rgba(255,255,255,.45);-webkit-text-stroke:0.2px;">Website...</span>
<span id="t81" class="t" style="left:498.30px;top:52.80px;font:400 6.00px/10px 'DejaVu Sans',sans-serif;color:#7d7d7d;letter-spacing:-0.007px;text-shadow:0 0.5px 0 rgba(255,255,255,.45);-webkit-text-stroke:0.2px;">safari sc...</span>
<span id="t82" class="t" style="left:561.20px;top:52.80px;font:400 6.00px/10px 'DejaVu Sans',sans-serif;color:#7d7d7d;letter-spacing:0.079px;text-shadow:0 0.5px 0 rgba(255,255,255,.45);-webkit-text-stroke:0.2px;">overflow</span>
<span id="t83" class="t" style="left:617.50px;top:52.80px;font:400 6.00px/10px 'DejaVu Sans',sans-serif;color:#7d7d7d;letter-spacing:-0.031px;text-shadow:0 0.5px 0 rgba(255,255,255,.45);-webkit-text-stroke:0.2px;">template...</span>
<div class="a" style="left:0;top:62.8px;width:700px;height:0.6px;background:#8f8f8f"></div>
<svg style="left:671.1px;top:54.8px" width="4.4" height="4.4" viewBox="0 0 10 10"><path d="M5 0.5 V9.5 M0.5 5 H9.5" stroke="#808080" stroke-width="2.2"/></svg>
<svg style="left:687px;top:55px" width="8.6" height="4.2" viewBox="0 0 17 8"><path d="M0.5 0 V8 M3.2 0 V8 M5.9 0 V8 M8.6 0 V8 M11.3 0 V8 M14 0 V8 M16.6 0 V8" stroke="#858585" stroke-width="1.6"/></svg>
</div></body></html>
